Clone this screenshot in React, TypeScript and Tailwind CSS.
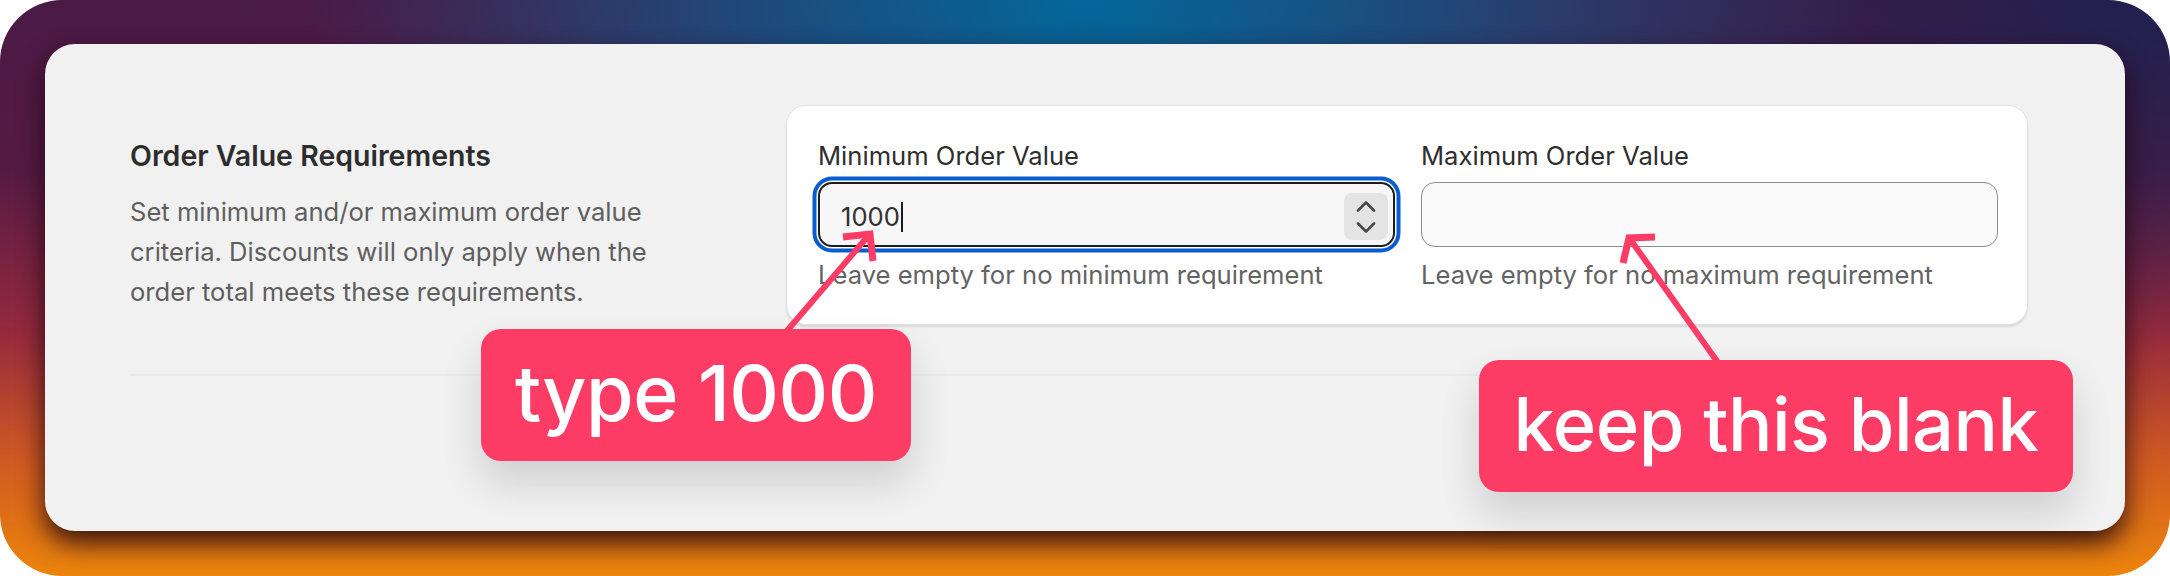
import React from 'react'

const pink = '#fd3c65'

const Chevrons = () => (
  <div className="absolute right-[5px] top-[9px] w-[44px] h-[47px] rounded-[8px] bg-[#e4e4e4] flex flex-col items-center justify-center gap-[10px]">
    <svg width="20" height="12" viewBox="0 0 20 12" fill="none">
      <path d="M2 10.5 L10 2.5 L18 10.5" stroke="#474747" strokeWidth="2.6" strokeLinecap="round" strokeLinejoin="round" />
    </svg>
    <svg width="20" height="12" viewBox="0 0 20 12" fill="none">
      <path d="M2 1.5 L10 9.5 L18 1.5" stroke="#474747" strokeWidth="2.6" strokeLinecap="round" strokeLinejoin="round" />
    </svg>
  </div>
)

const Field = ({
  label,
  helper,
  value,
  focused,
}: {
  label: string
  helper: string
  value?: string
  focused?: boolean
}) => (
  <div className="flex-1 flex flex-col">
    <div className="text-[25.6px] leading-[35px] text-[#2e2e2e] mb-[9px]">{label}</div>
    {focused ? (
      <div className="relative h-[65px] rounded-[14px] border-2 border-[#1c1c1c] bg-[#f7f7f7] shadow-[0_0_0_1.5px_#ffffff,0_0_0_5.5px_#0a5dd1] flex items-center pl-[21px]">
        <span className="text-[25.6px] text-[#303030] pt-[6px]">{value}</span>
        <span className="w-[2px] h-[30px] bg-[#1a1a1a] ml-[1px] mt-[4px]" />
        <Chevrons />
      </div>
    ) : (
      <div className="h-[65px] rounded-[14px] border border-[#8d8d8d] bg-[#fafafa]" />
    )}
    <div className="text-[25.6px] leading-[35px] text-[#636363] mt-[10px]">{helper}</div>
  </div>
)

const Tag = ({ text, className }: { text: string; className: string }) => (
  <div
    className={`absolute h-[132px] rounded-[20px] bg-[#fd3c65] text-white font-medium leading-none flex items-center justify-center tracking-[-0.5px] shadow-[0_22px_40px_rgba(0,0,0,0.14)] ${className}`}
  >
    <span className="-mt-[4px]">{text}</span>
  </div>
)

export default function App() {
  return (
    <div className="w-[2170px] h-[576px] bg-white font-['Inter','Noto_Sans',sans-serif] relative overflow-hidden">
      <div className="w-full h-full rounded-[62px] overflow-hidden pt-[44px] px-[45px] pb-[45px] [background-image:radial-gradient(ellipse_36%_75%_at_50%_0%,#03679b_0%,rgba(3,103,155,0.6)_45%,rgba(3,103,155,0)_100%),radial-gradient(ellipse_30%_60%_at_100%_0%,#1f2150_0%,rgba(31,33,80,0)_100%),linear-gradient(to_bottom,#4a1a46_0%,#561b44_30%,#962a3d_58%,#d05a22_80%,#ec850b_100%)]">
        <div className="w-full h-full rounded-[30px] bg-[#f1f1f1] shadow-[0_12px_26px_rgba(30,6,14,0.88)] pl-[85px] pr-[97px] pt-[61px]">
          <div className="flex">
            <div className="w-[560px] mr-[96px] pt-[31px]">
              <div className="text-[28.5px] leading-[40px] font-semibold text-[#2d2d2d]">Order Value Requirements</div>
              <p className="mt-[16px] text-[25.6px] leading-[40px] text-[#5e5e5e]">
                Set minimum and/or maximum order value criteria. Discounts will only apply when the order total meets these requirements.
              </p>
            </div>
            <div className="flex-1 rounded-[20px] bg-white border border-[#e2e2e2] shadow-[0_2px_2px_rgba(0,0,0,0.1)] pt-[32px] pb-[32px] pl-[31px] pr-[29px] flex gap-[26px]">
              <Field label="Minimum Order Value" helper="Leave empty for no minimum requirement" value="1000" focused />
              <Field label="Maximum Order Value" helper="Leave empty for no maximum requirement" />
            </div>
          </div>
          <div className="mt-[49px] border-t-2 border-[#e9e9e9]" />
        </div>
      </div>

      <svg className="absolute left-0 top-0 pointer-events-none" width="2170" height="576" viewBox="0 0 2170 576" fill="none">
        <g stroke={pink} strokeWidth="6" strokeLinecap="butt">
          <path d="M869 235 L786 332" />
          <path d="M843 237 L870 234 L873 261" strokeLinejoin="miter" strokeWidth="7" />
          <path d="M1630 239 L1719 364" />
          <path d="M1655 237 L1629 238 L1623 263" strokeLinejoin="miter" strokeWidth="7" />
        </g>
      </svg>

      <Tag text="type 1000" className="left-[481px] top-[329px] w-[430px] text-[77px]" />
      <Tag text="keep this blank" className="left-[1479px] top-[360px] w-[594px] text-[74px]" />
    </div>
  )
}
